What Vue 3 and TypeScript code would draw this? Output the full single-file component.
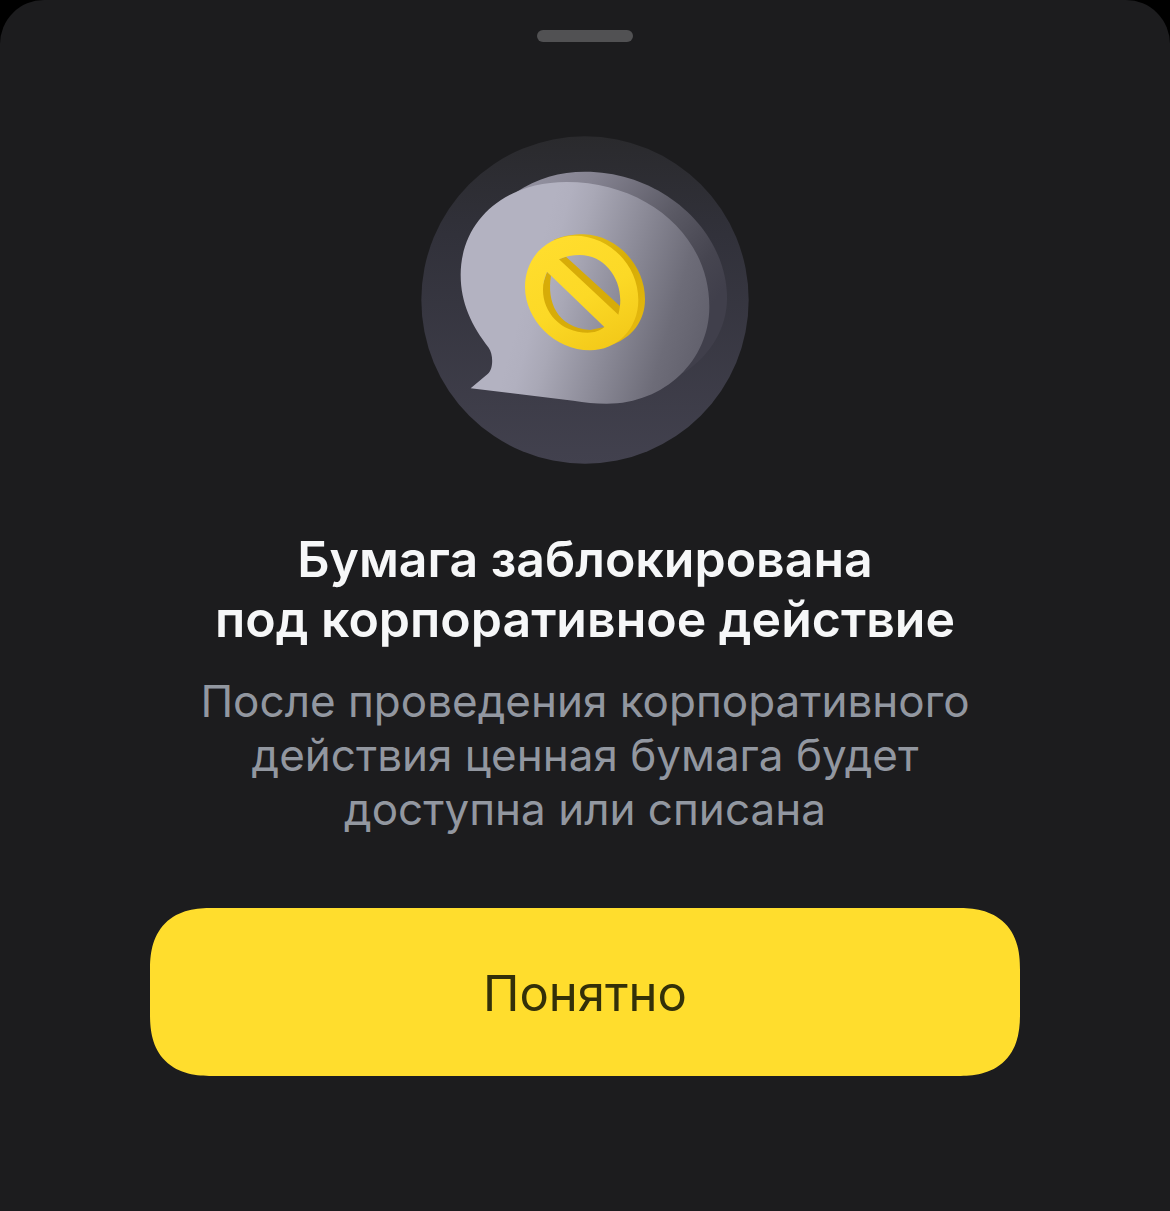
<script setup lang="ts">
import { ref } from 'vue'

const open = ref<boolean>(true)
const titleLines: string[] = ['Бумага заблокирована', 'под корпоративное действие']
const message = 'После проведения корпоративного действия ценная бумага будет доступна или списана'

function dismiss(): void {
  open.value = false
}
</script>

<template>
  <main v-if="open" class="sheet" role="dialog" aria-labelledby="sheet-title" aria-describedby="sheet-message">
    <div class="grip"></div>

    <svg class="art" viewBox="33 33 984 984" aria-hidden="true">
      <defs>
        <linearGradient id="disc" x1="0" y1="0" x2="0" y2="1">
          <stop offset="0" stop-color="#2a2a2d" />
          <stop offset="0.3" stop-color="#31313a" />
          <stop offset="1" stop-color="#42414e" />
        </linearGradient>
        <linearGradient id="face" gradientUnits="userSpaceOnUse" x1="370" y1="431" x2="900" y2="584">
          <stop offset="0" stop-color="#b3b2c1" />
          <stop offset="0.08" stop-color="#b1b0bf" />
          <stop offset="0.2" stop-color="#a9a8b6" />
          <stop offset="0.5" stop-color="#8b8a97" />
          <stop offset="0.8" stop-color="#6d6c78" />
          <stop offset="1" stop-color="#62616d" />
        </linearGradient>
        <linearGradient id="side" gradientUnits="userSpaceOnUse" x1="380" y1="170" x2="890" y2="560">
          <stop offset="0" stop-color="#918f9e" />
          <stop offset="0.2" stop-color="#858391" />
          <stop offset="0.6" stop-color="#5a5964" />
          <stop offset="0.85" stop-color="#464550" />
          <stop offset="1" stop-color="#403f4b" />
        </linearGradient>
        <linearGradient id="gold" gradientUnits="userSpaceOnUse" x1="440" y1="350" x2="610" y2="680">
          <stop offset="0" stop-color="#ffdd2d" />
          <stop offset="0.5" stop-color="#fcd926" />
          <stop offset="1" stop-color="#f2c818" />
        </linearGradient>
        <linearGradient id="rim" gradientUnits="userSpaceOnUse" x1="500" y1="330" x2="700" y2="600">
          <stop offset="0" stop-color="#e3bd12" />
          <stop offset="0.5" stop-color="#d6ac05" />
          <stop offset="1" stop-color="#e5b90f" />
        </linearGradient>
      </defs>

      <circle cx="525" cy="525" r="491" fill="url(#disc)" />
      <path
        d="M318 202C380 160 450 140 525 140C760 140 951 320 951 520C951 605 905 690 820 744L600 600Z"
        fill="url(#side)"
      />
      <path
        d="M182 790L233 747C250 733 251 690 236 668C185 602 152 534 152 450C152 290 280 171 470 171C705 171 898 328 898 545C898 705 765 836 590 836C555 836 525 832 490 827Z"
        fill="url(#face)"
      />

      <path
        d="M430 345C460 332 490 328 520 328C620 330 705 420 705 522C705 590 665 636 610 658L660 560C670 450 590 355 500 350Z"
        fill="url(#rim)"
      />
      <path
        d="M447 403L468 395L634 547L625 573L610 576L435 415ZM411 440L423 452C410 530 440 606 540 615L583 606L560 635L450 620L385 520Z"
        fill="#d7ac08"
      />
      <path
        fill-rule="evenodd"
        d="M494 332C600 332 685 422 685 525C685 612 620 676 540 676C435 676 345 585 345 486C345 398 410 332 494 332ZM447 403L625 569C650 478 592 390 509 390C488 390 467 393 447 403ZM411 440C373 522 428 623 533 623C552 623 570 618 583 606Z"
        fill="url(#gold)"
      />
    </svg>

    <h1 id="sheet-title" class="title">
      <span v-for="line in titleLines" :key="line" class="title-line">{{ line }}</span>
    </h1>
    <p id="sheet-message" class="message">{{ message }}</p>
    <button class="confirm" type="button" @click="dismiss">Понятно</button>
  </main>
</template>

<style>
body {
  background: #000;
}
</style>

<style scoped>
.sheet {
  box-sizing: border-box;
  display: flex;
  flex-direction: column;
  align-items: center;
  min-height: 100vh;
  padding: 30px 24px 64px;
  border-radius: 44px 44px 0 0;
  background: #1c1c1e;
  font-family: Inter, "Noto Sans", sans-serif;
  text-align: center;
}

.grip {
  width: 96px;
  height: 12px;
  border-radius: 6px;
  background: #515153;
}

.art {
  display: block;
  width: 328px;
  height: 328px;
  margin-top: 94px;
}

.title {
  margin: 65px 0 0;
  color: #f6f7f8;
  font-size: 50px;
  font-weight: 600;
  line-height: 60px;
}

.title-line {
  display: block;
}

.message {
  max-width: 800px;
  margin: 25px 0 0;
  color: #9297a0;
  font-size: 44px;
  font-weight: 400;
  line-height: 54px;
}

.confirm {
  width: 100%;
  max-width: 870px;
  height: 168px;
  margin-top: 72px;
  padding: 2px 0 0;
  border: 0;
  border-radius: 52px;
  background: #ffdd2d;
  color: #333009;
  font-family: inherit;
  font-size: 49px;
  font-weight: 400;
  cursor: pointer;
}

@supports (corner-shape: squircle) {
  .confirm {
    border-radius: 62px;
    corner-shape: superellipse(1.3);
  }
}
</style>
